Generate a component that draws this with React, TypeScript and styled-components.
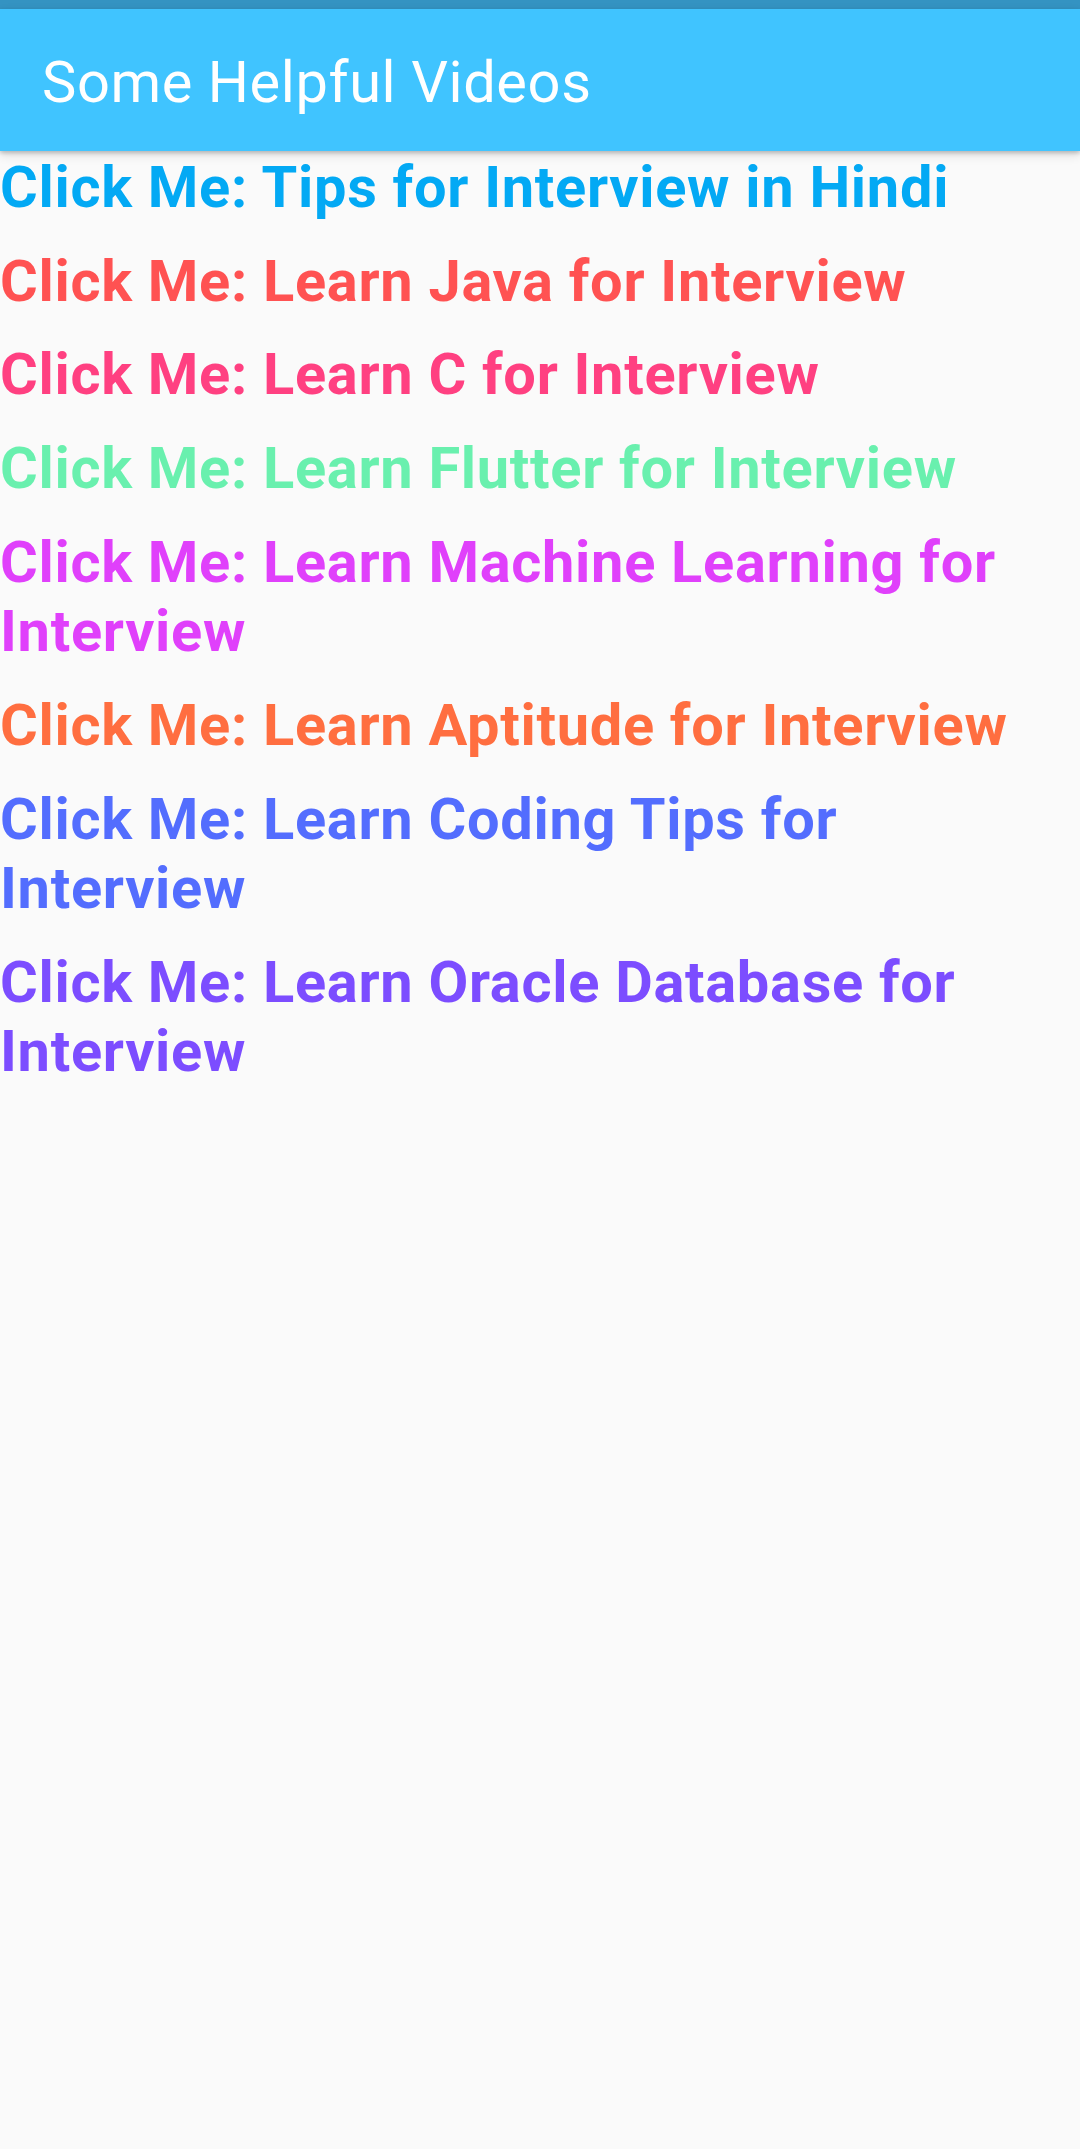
import * as React from 'react';
import styled, { createGlobalStyle } from 'styled-components';

const GlobalStyle = createGlobalStyle`
  html, body {
    margin: 0;
    padding: 0;
    background: #fafafa;
  }
  body {
    font-family: Roboto, "Liberation Sans", sans-serif;
  }
`;

const Root = styled.div`
  min-height: 100vh;
  background: #fafafa;
  display: flex;
  flex-direction: column;
`;

const StatusBar = styled.div`
  height: 9px;
  background: #3493c2;
`;

const AppBar = styled.header`
  height: 142px;
  box-sizing: border-box;
  background: #40c4ff;
  display: flex;
  align-items: center;
  padding: 5px 42px 0;
  box-shadow: 0 2px 4px rgba(0, 0, 0, 0.2), 0 4px 10px rgba(0, 0, 0, 0.12);
  position: relative;
  z-index: 1;
`;

const Title = styled.h1`
  margin: 0;
  color: #ffffff;
  font-size: 57.75px;
  font-weight: 400;
  line-height: 67.7px;
  letter-spacing: 0.6px;
`;

const List = styled.main`
  display: flex;
  flex-direction: column;
  gap: 24.3px;
  padding-top: 2px;
`;

const VideoLink = styled.a<{ $color: string }>`
  display: block;
  color: ${(p) => p.$color};
  font-size: 57.75px;
  font-weight: 700;
  line-height: 69.4px;
  letter-spacing: 0.7px;
  text-decoration: none;
  cursor: pointer;
`;

const videos = [
  { title: 'Tips for Interview in Hindi', color: '#03a9f4' },
  { title: 'Learn Java for Interview', color: '#ff5252' },
  { title: 'Learn C for Interview', color: '#ff4081' },
  { title: 'Learn Flutter for Interview', color: '#69f0ae' },
  { title: 'Learn Machine Learning for Interview', color: '#e040fb' },
  { title: 'Learn Aptitude for Interview', color: '#ff6e40' },
  { title: 'Learn Coding Tips for Interview', color: '#536dfe' },
  { title: 'Learn Oracle Database for Interview', color: '#7c4dff' },
];

const App = () => (
  <Root>
    <GlobalStyle />
    <StatusBar />
    <AppBar>
      <Title>Some Helpful Videos</Title>
    </AppBar>
    <List>
      {videos.map((v) => (
        <VideoLink key={v.title} $color={v.color}>
          Click Me: {v.title}
        </VideoLink>
      ))}
    </List>
  </Root>
);

export default App;
